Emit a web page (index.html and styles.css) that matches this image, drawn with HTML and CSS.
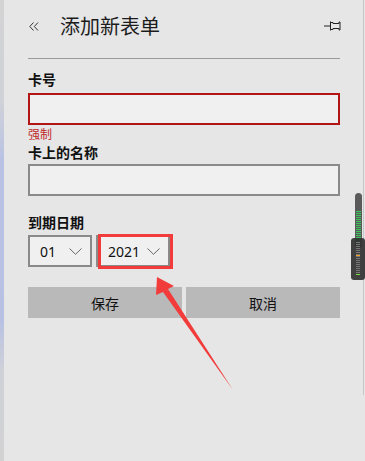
FILE: index.html
```html
<!DOCTYPE html>
<html lang="zh">
<head>
<meta charset="utf-8">
<link rel="stylesheet" href="styles.css">
</head>
<body>
<div class="app">
  <div class="strip"></div>
  <div class="panel">
    <div class="header">
      <svg class="back" width="10" height="9" viewBox="0 0 10 9"><polyline points="4.5,0.5 0.8,4.5 4.5,8.5" /><polyline points="9,0.5 5.3,4.5 9,8.5" /></svg>
      <div class="title">添加新表单</div>
      <svg class="pin" width="17" height="10" viewBox="0 0 17 10"><line x1="0" y1="5" x2="6" y2="5"/><line x1="6.5" y1="0.5" x2="6.5" y2="9.5"/><polyline points="6.5,1.5 9,1.5 9,2.5 15,2.5 15,1 16,1 16,9 15,9 15,7.5 9,7.5 9,8.5 6.5,8.5"/></svg>
    </div>
    <div class="label first">卡号</div>
    <div class="input error"></div>
    <div class="hint">强制</div>
    <div class="label">卡上的名称</div>
    <div class="input name"></div>
    <div class="label date">到期日期</div>
    <div class="selects">
      <div class="select month"><span>01</span><svg class="chev" width="13" height="7" viewBox="0 0 13 7"><polyline points="0.5,0.5 6.5,6.3 12.5,0.5"/></svg></div>
      <div class="select year"><span>2021</span><svg class="chev" width="13" height="7" viewBox="0 0 13 7"><polyline points="0.5,0.5 6.5,6.3 12.5,0.5"/></svg>
        <div class="mark"></div>
      </div>
    </div>
    <div class="buttons">
      <div class="btn">保存</div>
      <div class="btn">取消</div>
    </div>
    <div class="edge"></div>
    <svg class="arrow" width="365" height="461" viewBox="0 0 365 461"><polygon points="157,277 174,286 168,289 233,390 163,292 156,295"/></svg>
    <div class="meter">
      <div class="track"><div class="bars"></div></div>
      <div class="box"><div class="gbars"></div><div class="orange"></div><div class="green"></div></div>
    </div>
  </div>
</div>
</body>
</html>
```
FILE: styles.css
```css
html, body {
  margin: 0;
  padding: 0;
  width: 365px;
  height: 461px;
  overflow: hidden;
  background: #e6e6e6;
}
.app {
  display: flex;
  width: 365px;
  height: 461px;
  font-family: "Noto Sans CJK SC", "Noto Sans", sans-serif;
  color: #111;
}
.strip {
  width: 4px;
  flex: none;
  background: linear-gradient(to bottom, #d3d3d3 0px, #d0d2d8 100px, #b9c2e4 160px, #b8c1e4 320px, #cfd1d8 370px, #d2d2d2 461px);
}
.panel {
  flex: 1;
  position: relative;
  padding: 0 25px 0 24px;
  background: #e6e6e6;
}
.header {
  border-bottom: 1px solid #9a9a9a;
  display: flex;
  align-items: center;
  box-sizing: border-box;
  height: 59px;
}
.back {
  fill: none;
  stroke: #333;
  stroke-width: 1;
  margin-left: 1px;
  margin-top: -6px;
}
.title {
  margin-left: 21px;
  font-size: 20px;
  line-height: 28px;
  color: #1c1c1c;
  margin-top: -6px;
}
.pin {
  margin-left: auto;
  margin-right: -1px;
  fill: none;
  stroke: #222;
  stroke-width: 1;
  margin-top: -6px;
}
.label {
  font-size: 14px;
  font-weight: bold;
  line-height: 17px;
  color: #111;
}
.label.first {
  margin-top: 12px;
  margin-bottom: 5px;
}
.input {
  height: 32px;
  box-sizing: border-box;
  background: #f0f0f0;
  border: 2px solid #8a8a8a;
}
.input.error {
  border-color: #b21515;
}
.hint {
  font-size: 12px;
  line-height: 16px;
  color: #c02a2a;
  margin-top: 1px;
  margin-bottom: 2px;
}
.input.name {
  margin-top: 3px;
}
.label.date {
  margin-top: 18px;
  margin-bottom: 4px;
}
.selects {
  display: flex;
  gap: 4px;
}
.select {
  position: relative;
  height: 32px;
  box-sizing: border-box;
  border: 2px solid #8a8a8a;
  background: #f0f0f0;
  display: flex;
  align-items: center;
  font-family: "Noto Sans", "Liberation Sans", sans-serif;
  font-size: 14px;
  color: #111;
}
.select.month {
  width: 64px;
  padding-left: 10px;
}
.select.year {
  width: 74px;
  padding-left: 10px;
}
.select span {
  flex: 1;
}
.chev {
  fill: none;
  stroke: #666;
  stroke-width: 1;
  margin-right: 8px;
  margin-top: 1px;
}
.mark {
  position: absolute;
  left: 0px;
  top: -3px;
  width: 75px;
  height: 35px;
  box-sizing: border-box;
  border: 3px solid #f23c3c;
}
.buttons {
  margin-top: 20px;
  display: flex;
  gap: 4px;
}
.btn {
  flex: 1;
  height: 31px;
  background: #b9b9b9;
  display: flex;
  align-items: center;
  justify-content: center;
  font-size: 14px;
  color: #111;
}
.edge {
  position: absolute;
  left: 359px;
  top: 0;
  width: 1px;
  height: 395px;
  background: #c6c6c6;
}
.arrow {
  position: absolute;
  left: -4px;
  top: 0;
  fill: #f23c3c;
  pointer-events: none;
}
.meter {
  position: absolute;
  left: 347px;
  top: 193px;
  width: 14px;
  height: 87px;
}
.track {
  position: absolute;
  left: 4px;
  top: 0;
  width: 7px;
  height: 55px;
  border-radius: 4px;
  background: #5a5a5a;
}
.bars {
  position: absolute;
  left: 1px;
  top: 18px;
  width: 5px;
  height: 34px;
  background: repeating-linear-gradient(to bottom, #3cc55a 0px, #3cc55a 1px, transparent 1px, transparent 2px);
}
.box {
  position: absolute;
  left: 0;
  top: 45px;
  width: 14px;
  height: 42px;
  border-radius: 3px;
  background: rgba(50, 50, 50, 0.92);
}
.gbars {
  position: absolute;
  left: 5px;
  top: 4px;
  width: 4px;
  height: 32px;
  background: repeating-linear-gradient(to bottom, #777 0px, #777 1px, transparent 1px, transparent 2px);
}
.orange {
  position: absolute;
  left: 5px;
  top: 17px;
  width: 4px;
  height: 1px;
  background: #f0a020;
}
.green {
  position: absolute;
  left: 5px;
  top: 36px;
  width: 4px;
  height: 1px;
  background: #7be03a;
}
```
